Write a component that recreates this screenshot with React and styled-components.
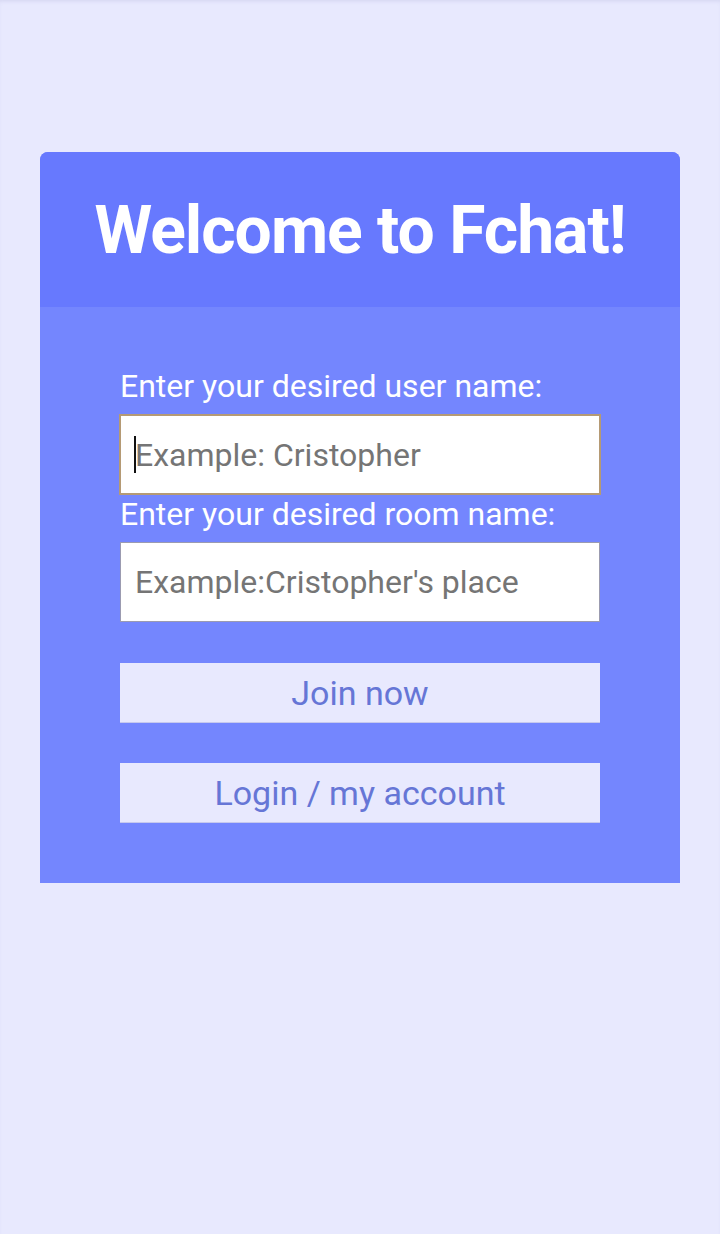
import React from "react";
import styled, { createGlobalStyle } from "styled-components";

const Global = createGlobalStyle`
  html, body { margin: 0; padding: 0; background: #e8e9fe; }
  body { font-family: Roboto, "Noto Sans", Arial, sans-serif; min-height: 1234px; }
  * { box-sizing: border-box; }
`;

const Page = styled.div`
  min-height: 1234px;
  background: #e8e9fe;
  padding: 152px 40px 0;
  box-shadow: inset 0 3px 4px -2px rgba(120, 120, 180, 0.18);
`;

const Card = styled.section`
  display: flex;
  flex-direction: column;
  border-radius: 8px 8px 0 0;
  overflow: hidden;
  background: #7486fe;
`;

const Header = styled.header`
  height: 155px;
  background: #6779fe;
  display: flex;
  align-items: center;
  justify-content: center;
`;

const Title = styled.h1`
  margin: 0;
  padding-top: 2px;
  color: #ffffff;
  font-family: Roboto, Arial, sans-serif;
  font-weight: 700;
  font-size: 66px;
  letter-spacing: -1px;
`;

const Form = styled.form`
  display: flex;
  flex-direction: column;
  padding: 62px 80px 60px;
`;

const Label = styled.label`
  display: block;
  color: #ffffff;
  font-size: 32px;
  line-height: 35px;
  margin: ${(p) => p.$top || 0}px 0 10px;
`;

const Field = styled.div`
  position: relative;
`;

const Input = styled.input`
  display: block;
  height: ${(p) => (p.$focused ? 81 : 80)}px;
  margin-left: ${(p) => (p.$focused ? -1 : 0)}px;
  width: ${(p) => (p.$focused ? "calc(100% + 2px)" : "100%")};
  background: #ffffff;
  border: ${(p) => (p.$focused ? "2px solid #b59a74" : "1px solid #9b9bb0")};
  padding: 0 0 0 14px;
  font-family: Roboto, Arial, sans-serif;
  font-size: 32px;
  color: #333;
  outline: none;
  border-radius: 0;
  &::placeholder { color: #757575; opacity: 1; }
`;

const Caret = styled.span`
  position: absolute;
  left: 14px;
  top: 22px;
  width: 2px;
  height: 37px;
  background: #111;
`;

const Button = styled.button`
  display: block;
  width: 100%;
  height: 60px;
  margin-top: ${(p) => p.$top}px;
  background: #e8e9fe;
  border: none;
  border-bottom: 1px solid #c6c9ee;
  color: #6676d6;
  font-family: Roboto, Arial, sans-serif;
  font-size: 34px;
  cursor: pointer;
`;

export default function App() {
  return (
    <>
      <Global />
      <Page>
        <Card>
          <Header>
            <Title>Welcome to Fchat!</Title>
          </Header>
          <Form onSubmit={(e) => e.preventDefault()}>
            <Label htmlFor="user">Enter your desired user name:</Label>
            <Field>
              <Input id="user" $focused placeholder="Example: Cristopher" />
              <Caret />
            </Field>
            <Label htmlFor="room" $top={2}>Enter your desired room name:</Label>
            <Input id="room" placeholder="Example:Cristopher's place" />
            <Button type="button" $top={41}>Join now</Button>
            <Button type="button" $top={40}>Login / my account</Button>
          </Form>
        </Card>
      </Page>
    </>
  );
}
